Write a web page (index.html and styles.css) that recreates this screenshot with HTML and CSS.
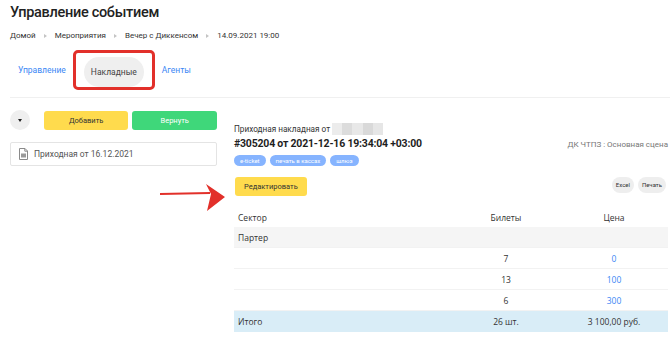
FILE: index.html
```html
<!DOCTYPE html>
<html lang="ru">
<head>
    <meta charset="UTF-8">
    <meta name="viewport" content="width=device-width, initial-scale=1.0">
    <title>Управление событием</title>
    <link rel="stylesheet" href="styles.css">
</head>
<body>
    <div class="page">
        <h1 class="title">Управление событием</h1>
        <div class="crumbs">
            <span>Домой</span><span class="sep"></span>
            <span>Мероприятия</span><span class="sep"></span>
            <span>Вечер с Диккенсом</span><span class="sep"></span>
            <span>14.09.2021 19:00</span>
        </div>
        <div class="tabs">
            <a class="tab">Управление</a>
            <div class="tab-mark">
                <span class="tab active">Накладные</span>
                <div class="highlight"></div>
            </div>
            <a class="tab">Агенты</a>
        </div>

        <div class="content">
            <div class="side">
                <div class="side-actions">
                    <button class="round-btn"><span class="caret"></span></button>
                    <button class="btn yellow wide">Добавить</button>
                    <button class="btn green wide">Вернуть</button>
                </div>
                <div class="doc-item">
                    <svg class="doc-icon" width="9" height="12" viewBox="0 0 9 12">
                        <path d="M0.5 0.5h5.5l2.5 2.5v8.5h-8z" fill="none" stroke="#8a8a8a"/>
                        <path d="M5.8 0.5v2.7h2.7" fill="none" stroke="#8a8a8a"/>
                        <rect x="2" y="5.5" width="5" height="4" fill="#9a9a9a"/>
                    </svg>
                    <span>Приходная от 16.12.2021</span>
                </div>
            </div>

            <div class="main">
                <div class="doc-sub">Приходная накладная от <span class="blur"></span></div>
                <div class="doc-head">
                    <div class="doc-title">#305204 от 2021-12-16 19:34:04 +03:00</div>
                    <div class="venue">ДК ЧТПЗ : Основная сцена</div>
                </div>
                <div class="tags">
                    <span class="tag">e-ticket</span>
                    <span class="tag">печать в кассах</span>
                    <span class="tag">шлюз</span>
                </div>
                <div class="doc-actions">
                    <button class="btn yellow">Редактировать</button>
                    <div class="small-btns">
                        <span class="pill">Excel</span>
                        <span class="pill">Печать</span>
                    </div>
                </div>

                <div class="table">
                    <div class="row head">
                        <div>Сектор</div><div class="c">Билеты</div><div class="c">Цена</div>
                    </div>
                    <div class="row group">
                        <div>Партер</div><div></div><div></div>
                    </div>
                    <div class="row">
                        <div></div><div class="c">7</div><div class="c link">0</div>
                    </div>
                    <div class="row">
                        <div></div><div class="c">13</div><div class="c link">100</div>
                    </div>
                    <div class="row">
                        <div></div><div class="c">6</div><div class="c link">300</div>
                    </div>
                    <div class="row total">
                        <div>Итого</div><div class="c">26 шт.</div><div class="c">3 100,00 руб.</div>
                    </div>
                </div>
            </div>
        </div>

        <svg class="arrow" width="80" height="40" viewBox="0 0 80 40">
            <line x1="2" y1="20" x2="52" y2="19" stroke="#e2302a" stroke-width="2.2"/>
            <polygon points="48,10 67,23 49,37 53,20" fill="#e2302a"/>
        </svg>
    </div>
</body>
</html>
```

FILE: styles.css
```css
body {
    margin: 0;
    background: #fff;
    font-family: Roboto, "Noto Sans", sans-serif;
    color: #222;
}
.page {
    position: relative;
    width: 670px;
    height: 342px;
    overflow: hidden;
}
.title {
    margin: 0;
    padding: 2px 0 0 10px;
    font-size: 14.5px;
    font-weight: 500;
    letter-spacing: -0.3px;
    line-height: 22px;
    color: #222;
}
.crumbs {
    display: flex;
    align-items: center;
    gap: 8px;
    padding: 6px 0 0 10px;
    font-size: 8px;
    line-height: 12px;
    color: #333;
}
.sep {
    width: 0;
    height: 0;
    border-left: 3px solid #c4c4c4;
    border-top: 2.5px solid transparent;
    border-bottom: 2.5px solid transparent;
}
.tabs {
    display: flex;
    align-items: center;
    gap: 7px;
    margin: 8px 0 0 10px;
    padding: 0 0 7px 8px;
    border-bottom: 1px solid #f0f0f0;
    font-size: 8.5px;
}
.tab {
    color: #3b87f5;
}
.tab-mark {
    position: relative;
    padding: 7px 11px 3px;
}
.tab.active {
    display: block;
    width: 60px;
    height: 30px;
    line-height: 30px;
    text-align: center;
    border-radius: 15px;
    background: #efefef;
    color: #444;
}
.highlight {
    position: absolute;
    left: 0;
    top: 0;
    width: 76px;
    height: 34px;
    border: 3px solid #e2302a;
    border-radius: 5px;
}
.content {
    display: flex;
    gap: 17px;
    padding: 12px 2px 0 10px;
}
.side {
    width: 207px;
    flex-shrink: 0;
}
.side-actions {
    display: flex;
    align-items: center;
    gap: 4px;
}
.round-btn {
    width: 20px;
    height: 20px;
    margin-right: 10px;
    padding: 0;
    border: none;
    border-radius: 50%;
    background: #efefef;
    display: flex;
    align-items: center;
    justify-content: center;
}
.caret {
    width: 0;
    height: 0;
    border-top: 3px solid #222;
    border-left: 2.5px solid transparent;
    border-right: 2.5px solid transparent;
}
.btn {
    height: 19px;
    padding: 0 9px;
    border: none;
    border-radius: 3px;
    font-family: Roboto, sans-serif;
    font-size: 7.5px;
    color: #333;
}
.btn.wide {
    width: 85px;
    padding: 0;
}
.yellow {
    background: #ffdb4d;
}
.green {
    background: #3fd77a;
    color: #fff;
}
.doc-item {
    display: flex;
    align-items: center;
    gap: 6px;
    margin-top: 12px;
    height: 22px;
    padding-left: 8px;
    border: 1px solid #e4e4e4;
    border-radius: 2px;
    font-size: 8.5px;
    color: #555;
}
.main {
    flex: 1;
    padding-top: 12px;
}
.doc-sub {
    display: flex;
    align-items: center;
    gap: 2px;
    font-size: 8.2px;
    line-height: 14px;
    color: #333;
}
.blur {
    width: 51px;
    height: 12px;
    background: linear-gradient(90deg, #ececec 0 20%, #dcdcdc 20% 40%, #e8e8e8 40% 60%, #d9d9d9 60% 80%, #e6e6e6 80%);
}
.doc-head {
    display: flex;
    justify-content: space-between;
    align-items: center;
}
.doc-title {
    font-size: 10.5px;
    font-weight: 700;
    letter-spacing: -0.2px;
    line-height: 16px;
    color: #1e1e1e;
}
.venue {
    font-size: 8px;
    color: #777;
}
.tags {
    display: flex;
    gap: 4px;
    margin-top: 3px;
}
.tag {
    height: 11px;
    line-height: 11px;
    padding: 0 6px;
    border-radius: 6px;
    background: #86b4ff;
    color: #fff;
    font-size: 6px;
}
.doc-actions {
    display: flex;
    justify-content: space-between;
    align-items: flex-start;
    margin-top: 11px;
    padding-left: 1px;
    padding-right: 2px;
}
.small-btns {
    display: flex;
    gap: 4px;
}
.pill {
    height: 16px;
    line-height: 16px;
    padding: 0 4px;
    border-radius: 8px;
    background: #eee;
    font-size: 6px;
    color: #333;
}
.table {
    margin-top: 11px;
    font-family: "Open Sans", sans-serif;
    font-size: 8.5px;
    color: #333;
}
.row {
    display: grid;
    grid-template-columns: 1fr 108px 108px;
    height: 20px;
    align-items: center;
    padding: 0 0 0 4px;
    border-bottom: 1px solid #f2f2f2;
}
.row.head {
    border-bottom: none;
}
.row.group {
    background: #f5f5f5;
}
.row.total {
    background: #d9edf7;
    border-bottom: none;
    height: 21px;
}
.c {
    text-align: center;
}
.link {
    color: #3b87f5;
}
.arrow {
    position: absolute;
    left: 158px;
    top: 174px;
}
```
